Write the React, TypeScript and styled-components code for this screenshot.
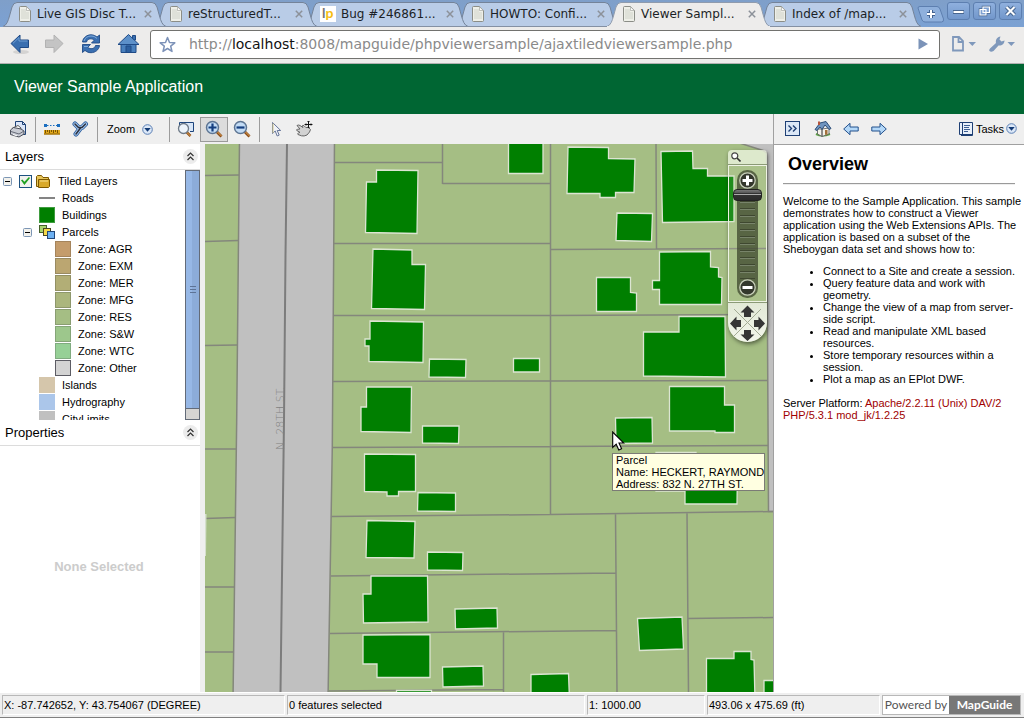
import React from "react";
import styled, { createGlobalStyle, css } from "styled-components";

const ui = `"Liberation Sans", Arial, sans-serif`;
const chrome = `"DejaVu Sans", Verdana, sans-serif`;

const GlobalStyle = createGlobalStyle`
  html, body, #root { height: 100%; }
  body { margin: 0; font: 11px/12px ${ui}; color: #000; background: #fff; }
  *, *::before, *::after { box-sizing: border-box; }
  button { margin: 0; padding: 0; border: 0; background: none; font: inherit; color: inherit; }
  svg { display: block; flex: none; }
`;

/* ---------- browser frame ---------- */

const Page = styled.div`
  display: flex;
  flex-direction: column;
  height: 100vh;
  overflow: hidden;
`;

const TabStrip = styled.div`
  display: flex;
  flex: none;
  align-items: flex-end;
  height: 27px;
  padding-left: 3px;
  background: linear-gradient(#7f9fc9, #7ba1d3);
  overflow: hidden;
`;

const Tab = styled.div<{ $active?: boolean; $order: number }>`
  display: grid;
  position: relative;
  z-index: ${(p) => (p.$active ? 20 : 10 - p.$order)};
  flex: 0 0 163px;
  height: 26px;
  margin-right: -12px;
  > * { grid-area: 1 / 1; }
`;

const TabContent = styled.div`
  display: flex;
  align-items: center;
  gap: 5px;
  padding: 0 12px 0 15px;
`;

const TabTitle = styled.button`
  flex: 1;
  text-align: left;
  white-space: nowrap;
  font: 12px/16px ${chrome};
  color: #1b1f26;
`;

const TabClose = styled.button`
  width: 12px;
  height: 12px;
  display: grid;
  place-items: center;
`;

const NewTab = styled.button`
  flex: none;
  margin: 0 2px 4px 19px;
`;

const WindowButtons = styled.div`
  display: flex;
  gap: 3px;
  margin: 0 2px 7px auto;
`;

const WindowButton = styled.button`
  display: grid;
  place-items: center;
  width: 23px;
  height: 18px;
  border: 1px solid #5d7fb0;
  border-radius: 3px;
  background: linear-gradient(#8fb0de, #7297cb);
`;

const TabList = styled.div`
  display: flex;
  flex: none;
  margin-right: -12px;
`;

const NavBar = styled.div`
  display: flex;
  flex: none;
  align-items: center;
  height: 37px;
  padding: 0 8px 2px 9px;
  background: #edeceb;
  border-bottom: 1px solid #b0b0b0;
`;

const NavButton = styled.button<{ $gap: number }>`
  flex: none;
  width: 24px;
  height: 24px;
  margin-right: ${(p) => p.$gap}px;
`;

const AddressBox = styled.form`
  display: flex;
  flex: 1;
  align-items: center;
  height: 29px;
  margin-right: 11px;
  padding: 0 11px 0 8px;
  border: 1px solid #72726f;
  border-radius: 3px;
  background: #fff;
  overflow: hidden;
`;

const Address = styled.div`
  display: grid;
  flex: 1;
  margin-left: 13px;
  font: 14px/20px ${chrome};
  color: #8a8a8a;
  white-space: nowrap;
  b { font-weight: normal; color: #111; }
`;

const MenuButton = styled.button`
  flex: none;
  & + & { margin-left: 11px; }
`;

/* ---------- application ---------- */

const Banner = styled.header`
  display: flex;
  flex: none;
  align-items: center;
  height: 50px;
  padding: 0 14px 4px;
  background: #006633;
  h1 { margin: 0; font: 16px/20px ${ui}; color: #fff; }
`;

const Main = styled.main`
  display: flex;
  flex: 1;
  min-height: 0;
`;

const Viewer = styled.section`
  display: flex;
  flex: 1;
  flex-direction: column;
  min-width: 0;
`;

const bar = css`
  display: flex;
  flex: none;
  align-items: center;
  background: #efefef;
`;

const Toolbar = styled.div`
  ${bar}
  height: 30px;
  padding-left: 4px;
`;

const Tool = styled.button<{ $pressed?: boolean }>`
  display: grid;
  place-items: center;
  flex: none;
  width: 28px;
  height: 25px;
  border: 1px solid ${(p) => (p.$pressed ? "#9a9a9a" : "transparent")};
  background: ${(p) => (p.$pressed ? "#dcdcdc" : "transparent")};
`;

const Separator = styled.span`
  flex: none;
  width: 1px;
  height: 25px;
  margin: 0 2px 0 3px;
  background: #9c9c9c;
`;

const ZoomMenu = styled.button`
  display: flex;
  align-items: center;
  gap: 7px;
  width: 66px;
  padding-left: 7px;
`;

const ViewerBody = styled.div`
  display: flex;
  flex: 1;
  min-height: 0;
`;

const Sidebar = styled.aside`
  display: flex;
  flex: 0 0 205px;
  flex-direction: column;
  border-right: 5px solid #efefef;
  background: #fff;
`;

const PanelHead = styled.div`
  display: flex;
  flex: none;
  align-items: center;
  justify-content: space-between;
  height: 26px;
  padding: 0 2px 0 5px;
  border-bottom: 1px solid #dcdcdc;
  h2 { margin: 0; font: 13px/16px ${ui}; }
`;

const LayersBody = styled.div`
  display: flex;
  flex: none;
  height: 250px;
  overflow: hidden;
`;

const Tree = styled.ul`
  flex: 1;
  margin: 0;
  padding: 3px 0 0;
  list-style: none;
  overflow: hidden;
`;

const TreeRow = styled.li<{ $indent: number; $gap: number }>`
  display: flex;
  align-items: center;
  gap: ${(p) => p.$gap}px;
  height: 17px;
  padding: 0 0 1px ${(p) => p.$indent}px;
  white-space: nowrap;
`;

const Toggle = styled.button`
  width: 9px;
  height: 9px;
`;

const LayerCheck = styled.input`
  appearance: none;
  flex: none;
  width: 13px;
  height: 13px;
  margin: 0 4px 0 7px;
  border: 1px solid #1d5180;
  background: #f2f2ee;
  display: grid;
  place-items: center;
  &:checked::before {
    content: "";
    width: 9px;
    height: 8px;
    background: #21a121;
    clip-path: polygon(0 40%, 15% 30%, 38% 58%, 88% 0, 100% 12%, 38% 100%);
  }
`;

const LayerLabel = styled.label`
  margin-left: 8px;
`;

const Swatch = styled.span<{ $fill: string; $edge: string }>`
  flex: none;
  width: 16px;
  height: 16px;
  border: 1px solid ${(p) => p.$edge};
  background: ${(p) => p.$fill};
`;

const RoadSwatch = styled.span`
  flex: none;
  width: 16px;
  height: 2px;
  background: #848484;
`;

const ScrollTrack = styled.div`
  display: flex;
  flex: 0 0 15px;
  flex-direction: column;
  border: 1px solid #636b78;
  background: #d6d5d3;
`;

const ScrollThumb = styled.div`
  display: grid;
  place-items: center;
  flex: 0 0 238px;
  border-bottom: 1px solid #636b78;
  background: linear-gradient(90deg, #97b8e6 50%, #8cacd9 50%);
`;

const PropertiesBody = styled.div`
  display: grid;
  flex: 1;
  place-items: center;
  padding: 0 2px 4px 0;
  font: bold 13px/16px ${ui};
  color: #ccc;
`;

const MapArea = styled.div`
  position: relative;
  flex: 1;
  min-width: 0;
  overflow: hidden;
  background: #a5be84;
  > svg:first-child { width: 100%; height: 100%; }
`;

const Tooltip = styled.div`
  position: absolute;
  left: 407px;
  top: 309px;
  padding: 0 0 0 3px;
  width: 153px;
  height: 38px;
  border: 1px solid #7b7b76;
  background: #ffffe1;
  white-space: nowrap;
`;

const Pointer = styled.svg`
  position: absolute;
  left: 407px;
  top: 287px;
`;

/* ---------- floating map navigator ---------- */

const Navigator = styled.div`
  position: absolute;
  right: 6px;
  top: 6px;
  width: 39px;
  border-radius: 4px 4px 20px 20px;
  box-shadow: 1px 2px 4px rgba(0, 0, 0, 0.5);
  overflow: hidden;
`;

const NavigatorTop = styled.button`
  display: block;
  width: 100%;
  height: 15px;
  padding-left: 3px;
  border-bottom: 1px solid #8b9a76;
  background: rgba(240, 247, 228, 0.75);
`;

const NavigatorMiddle = styled.div`
  display: grid;
  justify-items: center;
  height: 137px;
  padding: 4px 0;
  border: 1px solid #eef3e4;
  background: rgba(205, 222, 180, 0.15);
`;

const SliderRail = styled.div`
  display: flex;
  flex-direction: column;
  align-items: center;
  width: 21px;
  height: 128px;
  padding: 2px 0;
  border-radius: 10px;
  background: rgba(55, 65, 40, 0.72);
`;

const RoundButton = styled.button`
  width: 17px;
  height: 17px;
`;

const ZoomRange = styled.input`
  appearance: none;
  writing-mode: vertical-lr;
  direction: rtl;
  width: 29px;
  height: 90px;
  margin: 0;
  background: repeating-linear-gradient(transparent 0 5px, #3f4830 5px 6px, #78846a 6px 7px) center / 15px 100% no-repeat;
  &::-webkit-slider-thumb {
    appearance: none;
    width: 29px;
    height: 12px;
    border: 1px solid #222;
    border-radius: 4px;
    background: linear-gradient(#777, #555 30%, #333 31%, #333 35%, #aaa 36%, #aaa 45%, #333 46%, #2a2a2a);
  }
`;

const Dial = styled.div`
  height: 40px;
  border-top: 1px solid #8b9a76;
  background: linear-gradient(#e2e9d6, #f3f6ec);
`;

/* ---------- task pane ---------- */

const TaskPane = styled.aside`
  display: flex;
  flex: 0 0 251px;
  flex-direction: column;
  border-left: 1px solid #a0a0a0;
  background: #fff;
`;

const TaskBar = styled.div`
  ${bar}
  height: 31px;
  padding: 0 7px 1px 4px;
  border-bottom: 1px solid #a0a0a0;
`;

const TaskNav = styled.nav`
  display: flex;
  margin-left: 3px;
`;

const TasksButton = styled.button`
  display: flex;
  align-items: center;
  gap: 2px;
  margin-left: auto;
`;

const Article = styled.article`
  padding: 9px 0 0 9px;
  h2 { margin: 0 5px 9px; font: bold 18px/20px ${ui}; }
  hr { margin: 0 9px 10px 0; border: 0; border-top: 1px solid #9a9a9a; border-bottom: 1px solid #eee; }
  p { margin: 0 0 10px; }
  ul { margin: 0 0 12px; padding-left: 40px; }
`;

const Server = styled.span`
  color: #a00000;
`;

/* ---------- status bar ---------- */

const StatusBar = styled.footer`
  display: flex;
  flex: none;
  gap: 2px;
  height: 26px;
  padding: 2px 3px 2px 2px;
  background: #efefef;
  border-top: 1px solid #fff;
  border-bottom: 1px solid #808080;
`;

const StatusCell = styled.div<{ $basis: number; $grow?: boolean }>`
  flex: ${(p) => (p.$grow ? 1 : 0)} 0 ${(p) => p.$basis}px;
  padding: 3px 1px;
  border: 1px solid;
  border-color: #b8b8b8 #fff #fff #b8b8b8;
  white-space: nowrap;
`;

const Powered = styled.a`
  display: flex;
  flex: none;
  width: 139px;
  border: 1px solid #b8b8b8;
  background: #fff;
  font: 12px/18px Lato, sans-serif;
  text-align: center;
  text-decoration: none;
  color: #555;
  white-space: nowrap;
  span { flex: 0 0 66px; }
  b { flex: 1; background: #777; color: #fff; }
`;

/* ---------- icons ---------- */

const PageIcon = () => (
  <svg width="14" height="16" viewBox="0 0 14 16">
    <path d="M1.5 1.5q0-1 1-1h6l4 4v10q0 1-1 1h-9q-1 0-1-1z" fill="#eeefe8" stroke="#8b8d87" />
    <path d="M3 3h5v3h3v7H3z" fill="#dfe1d9" />
    <path d="M8.5.8v3.7h3.8z" fill="#fff" stroke="#a6a8a2" strokeWidth=".7" />
  </svg>
);

const LaunchpadIcon = () => (
  <svg width="16" height="16" viewBox="0 0 16 16" overflow="visible">
    <rect width="16" height="16" fill="#fff" />
    <text x="2" y="12" fontFamily="Lato, sans-serif" fontSize="14" fontWeight="bold" fill="#777">
      l<tspan fill="#f5bd10">p</tspan>
    </text>
  </svg>
);

const TabShape = ({ active }: { active?: boolean }) => (
  <svg width="163" height="26" viewBox="0 0 163 26">
    <path
      d="M0 25.5C4 24 5 20 6.5 15L9 6Q10.5 1.5 14 1.5H149Q152.500 1.500 154 6L156.500 15C158 20 159 24 163 25.500"
      fill={active ? "#edeceb" : "#b9cce7"}
      stroke={active ? "#8f9bad" : "#748399"}
    />
    <path d="M0 25.500H163" stroke={active ? "#edeceb" : "#8490a3"} />
  </svg>
);

const CloseIcon = () => (
  <svg width="8" height="8" viewBox="0 0 8 8">
    <path d="M.8.800l6.400 6.400M7.200.800L.8 7.200" stroke="#8c9199" strokeWidth="1.500" />
  </svg>
);

const blueFill = "#3a6fb0";

const BackIcon = () => (
  <svg width="24" height="24" viewBox="0 0 24 24">
    <ellipse cx="12" cy="20" rx="8" ry="2" fill="#d4d3d2" />
    <path d="M2 11.500L11 3v5h8.500v7.500H11v5z" fill={blueFill} stroke="#1f4a86" strokeLinejoin="round" />
    <path d="M4 11.300L10 5.500V9h8.500" fill="none" stroke="#6f9fd4" />
  </svg>
);

const ForwardIcon = () => (
  <svg width="24" height="24" viewBox="0 0 24 24">
    <path d="M20 11.500L11 3v5H2.500v7.500H11v5z" fill="#c4c4c4" stroke="#b2b2b2" strokeLinejoin="round" />
  </svg>
);

const ReloadIcon = () => (
  <svg width="24" height="24" viewBox="0 0 24 24">
    <g fill={blueFill} stroke="#1f4a86" strokeWidth=".9" strokeLinejoin="round">
      <path d="M3.500 10C4 5.500 8 2.800 12 2.800c2.500 0 4.400.9 6 2.300L20.500 3v8h-8l2.700-2.800C13 6 8.500 6.200 7.500 10z" />
      <path d="M20.500 13.500c-.5 4.500-4.500 7.200-8.500 7.200-2.500 0-4.400-.9-6-2.300L3.500 20.500v-8h8L8.800 15.300c2.200 2.200 6.700 2 7.700-1.800z" />
    </g>
    <path d="M5 9C6 5.500 9 4 12 4s5 1.500 6 2.500M5 14.500h4" fill="none" stroke="#7fabdc" />
  </svg>
);

const HomeIcon = () => (
  <svg width="24" height="24" viewBox="0 0 24 24">
    <path d="M5 12v8.500h15V12" fill="#4a80bd" stroke="#1f4a86" />
    <path d="M16.500 3.500h3V8h-3z" fill={blueFill} stroke="#1f4a86" />
    <path d="M2 12.500L12.500 2.500 23 12.500z" fill="#5d90c9" stroke="#1f4a86" strokeLinejoin="round" />
    <path d="M10 14h5v6.500h-5z" fill="#2c5f9f" stroke="#1f4a86" />
  </svg>
);

const StarIcon = () => (
  <svg width="17" height="17" viewBox="0 0 17 17">
    <path
      d="M8.500 1.500l2 5 5.300.3-4.100 3.400 1.300 5.200-4.500-2.900L4 15.400l1.300-5.200L1.200 6.800l5.300-.3z"
      fill="#fff"
      stroke="#7d92b8"
      strokeWidth="1.500"
      strokeLinejoin="round"
    />
  </svg>
);

const PageMenuIcon = () => (
  <svg width="26" height="18" viewBox="0 0 26 18">
    <path d="M2 2h6l4 4v9.500H2zM7.500 2v5h5" fill="none" stroke="#7f98bb" strokeWidth="1.800" />
    <path d="M17.500 7h7.500l-3.700 4z" fill="#7f98bb" />
  </svg>
);

const WrenchIcon = () => (
  <svg width="28" height="18" viewBox="0 0 28 18">
    <path
      d="M2 13.500L8 8C7.300 5 9 2 12.500 1.500L11.500 4.500 13.500 6.500 16.500 5.500C16.500 9 13.500 11 10.500 10.500L5.500 16Q3 17.500 1.500 16 .5 15 2 13.500z"
      fill="#7f98bb"
    />
    <path d="M19.500 7H27l-3.700 4z" fill="#7f98bb" />
  </svg>
);

const ChevronDisc = () => (
  <svg width="11" height="11" viewBox="0 0 11 11">
    <circle cx="5.500" cy="5.500" r="4.800" fill="#dbe7f7" stroke="#5a7fb4" />
    <path d="M2.300 4h6.400L5.500 7.800z" fill="#123a75" />
  </svg>
);

const PrintIcon = () => (
  <svg width="18" height="18" viewBox="0 0 18 18">
    <path d="M6.500 1.500h7l3 3v10h-10z" fill="#dbe6f8" stroke="#1e4276" />
    <path d="M13.500 1.500v3h3" fill="none" stroke="#1e4276" />
    <path d="M3.500 8L9 5.500l3 2.500-1 3" fill="#fff" stroke="#555" />
    <path d="M1.500 10l3-2.500L12 9l3 2v3l-5 3-8.500-2.500z" fill="#c9ccd4" stroke="#4a4e59" />
    <path d="M2 11.500l8 2.500 5-3" fill="none" stroke="#666b78" />
    <path d="M4 14.500l4 1.300" stroke="#fff" />
  </svg>
);

const MeasureIcon = () => (
  <svg width="18" height="18" viewBox="0 0 18 18">
    <path d="M1 4h3v3H1zM14 4h3v3h-3z" fill="#1c6fc0" />
    <path d="M4 5.500h10" stroke="#1c6fc0" strokeDasharray="1.500 1.500" />
    <path d="M1 10h16v4.500H1z" fill="#e0a81d" />
    <path d="M1 14h16" stroke="#8a5c00" />
    <path d="M2.500 10v3M4.500 10v2M6.500 10v3M8.500 10v2M10.500 10v3M12.500 10v2M14.500 10v3" stroke="#7a5200" />
  </svg>
);

const BufferIcon = () => (
  <svg width="18" height="18" viewBox="0 0 18 18">
    <path d="M4 4l3.500 3.500h3.500L14.500 4M9.500 8L5 14" fill="none" stroke="#2a5c9c" strokeWidth="5" strokeLinecap="round" strokeLinejoin="round" />
    <path d="M4 4l3.500 3.500h3.500L14.500 4M9.500 8L5 14" fill="none" stroke="#a8c9ee" strokeWidth="3.400" strokeLinecap="round" strokeLinejoin="round" />
    <path d="M4 4l3.500 3.500h3.500L14.500 4M9.500 8L5 14" fill="none" stroke="#2b3140" strokeWidth="1.500" strokeLinecap="round" />
  </svg>
);

const ZoomRectIcon = () => (
  <svg width="18" height="18" viewBox="0 0 18 18">
    <path d="M2.500 5V2.500h14v9H13" fill="#d8e6f7" stroke="#1d457d" />
    <path d="M9.500 12l4 4" stroke="#8a4c16" strokeWidth="2.500" />
    <path d="M9.500 12l4 4" stroke="#e6a85a" />
    <circle cx="6.500" cy="8.500" r="5" fill="#edf4fb" stroke="#6e7a88" strokeWidth="1.300" />
  </svg>
);

const Lens = ({ plus }: { plus?: boolean }) => (
  <svg width="18" height="18" viewBox="0 0 18 18">
    <path d="M11.500 11.500l5 5" stroke="#8a4c16" strokeWidth="2.800" />
    <path d="M12 11.500l4.500 4.500" stroke="#e6a85a" />
    <circle cx="7.500" cy="7.500" r="6" fill="#c3dcf5" stroke="#5d7593" strokeWidth="1.500" />
    <path d={plus ? "M3.500 7.500h8M7.500 3.500v8" : "M3.500 7.500h8"} stroke="#153f80" strokeWidth="2.200" />
  </svg>
);

const SelectIcon = () => (
  <svg width="18" height="18" viewBox="0 0 18 18">
    <path d="M5.500 2.500v11l2.700-2.500 2 5 2-.9-2-4.600h3.500z" fill="#f1f3f8" stroke="#66759a" strokeLinejoin="round" />
    <path d="M6 3.500V13" stroke="#d5c98a" />
  </svg>
);

const PanIcon = () => (
  <svg width="18" height="18" viewBox="0 0 18 18">
    <path
      d="M2 5.500q1.500-1 3 0L8 7.500 7 6q.5-1 2-.3l2 2q1.500-1 3 .3l1.500 1.500-1 2.500-2.500 3q-3 1.500-5.500.8L3 14.500q-1-1 .5-1.500L5 12.300 1.800 10.500q-.8-1 .8-1.200L5 9z"
      fill="#d2d2d2"
      stroke="#666"
    />
    <path d="M13.500 1v7M10 4.500h7M12.500 2l1-1 1 1M12.500 7l1 1 1-1M11 3.500l-1 1 1 1M16 3.500l1 1-1 1" stroke="#111" fill="none" />
  </svg>
);

const CollapseIcon = () => (
  <svg width="15" height="15" viewBox="0 0 15 15">
    <circle cx="7.500" cy="7.500" r="7.500" fill="#ececec" />
    <path d="M4.500 7l3-3 3 3M4.500 11l3-3 3 3" fill="none" stroke="#333" strokeWidth="1.200" />
  </svg>
);

const MinusBox = () => (
  <svg width="9" height="9" viewBox="0 0 9 9">
    <rect x=".5" y=".5" width="8" height="8" rx="1" fill="#f2f1ec" stroke="#7c96b5" />
    <path d="M2 4.500h5" stroke="#000" />
  </svg>
);

const FolderIcon = () => (
  <svg width="14" height="13" viewBox="0 0 14 13">
    <path d="M.5 11.500v-10l1-1h4l1.500 2h5.500v9z" fill="#e8c65a" stroke="#7d5800" />
    <path d="M2.500 12.500V4.500h11v7l-1 1z" fill="#d9a92a" stroke="#7d5800" />
    <path d="M4 6h8" stroke="#f7e08f" />
  </svg>
);

const ThemeIcon = () => (
  <svg width="16" height="16" viewBox="0 0 16 16">
    <rect x=".5" y="1.500" width="7" height="7" fill="#a9d36d" stroke="#44602a" />
    <rect x="4.500" y="4.500" width="7" height="7" fill="#f5d94a" stroke="#4b4620" />
    <rect x="8.500" y="7.500" width="7" height="7" fill="#6eb1f2" stroke="#22477a" />
  </svg>
);

const TaskToggleIcon = () => (
  <svg width="15" height="15" viewBox="0 0 15 15">
    <rect x=".5" y=".5" width="14" height="14" fill="#dbe7f6" stroke="#1e3f74" />
    <path d="M3.500 4.500l3 3-3 3M8 4.500l3 3-3 3" fill="none" stroke="#1e3f74" strokeWidth="1.400" />
  </svg>
);

const TaskHomeIcon = () => (
  <svg width="18" height="18" viewBox="0 0 18 18">
    <path d="M2 14q6 3 14 0" stroke="#5aa044" strokeWidth="2" fill="none" />
    <path d="M3.500 9v5l4.500 2.500V9zM8 9v7.500l7-2.500V8z" fill="#f4f2ea" stroke="#555" strokeWidth=".8" />
    <path d="M1 9.500L6 3l6-1.500 5 7-2 1L11 5 8 9.500 6 7 3 10.500z" fill="#6f94bf" stroke="#2c4d78" />
    <path d="M4 1.500h2V5H4z" fill="#b5563d" />
    <path d="M11 10h2.500v4.800H11z" fill="#a2703a" />
  </svg>
);

const TaskArrow = ({ forward }: { forward?: boolean }) => (
  <svg width="16" height="14" viewBox="0 0 16 14">
    <path
      d={forward ? "M15.300 7L9 1.300V5H.8v4H9v3.700z" : "M.7 7L7 1.300V5h8.200v4H7v3.700z"}
      fill="#b4d8f8"
      stroke="#23508c"
      strokeLinejoin="round"
    />
  </svg>
);

const TaskListIcon = () => (
  <svg width="15" height="15" viewBox="0 0 15 15">
    <path d="M.5 1.500h13v12H.5z" fill="#e9f0fa" stroke="#1e3f74" />
    <path d="M3.500 1.500v12M13.500 2v12.500H2" fill="none" stroke="#1e3f74" />
    <path d="M5 4.500h6M5 6.500h5M5 8.500h6M5 10.500h4" stroke="#3d5f93" />
  </svg>
);

/* ---------- map data ---------- */

const buildings = [
  "376.5,170 418,170.5 417,233.5 365.5,232.5 366.5,182 376.5,182",
  "373,249 412,250 412,264.5 425.5,264.5 424.5,309.5 371.5,308.5",
  "370,321 423.5,322 423,362.5 369,361.5 369,346 365,346 365,339 370,339",
  "429.5,359 466,359.5 465.5,377.5 429,377",
  "366.5,387 411.5,387 411,432.5 361,431.5 361,407 366.5,407",
  "422.5,426 459,426 458.5,443.5 422.5,443",
  "364.5,454 415.5,454.5 415.5,491.5 398.5,491.5 398.5,496 387,496 387,492 364.5,491.5",
  "418,492.5 455.5,493 455.5,511.5 417.5,511",
  "367,520.5 415,521.5 414,558 366,557.5",
  "427.5,552 463,552.5 462.5,570.5 427.5,570",
  "371,576 427.5,576 428,622 363.5,623 363,594 371,594",
  "455,609 497,608 497.5,628 455.5,629",
  "363,635 430,634.5 430,677.5 377,677.5 377,664 363,664",
  "442.5,667 483,666 483.5,686 443,687",
  "396.5,690.5 431.5,690.5 431.5,700 396.5,700",
  "508.5,142 543,142 543,173.5 508.5,173.5",
  "568,147 608.5,147.5 608.5,158.5 635,159 634,192.5 615.5,192.5 615.5,197.5 600,197.5 600,193.5 567,193.5",
  "617,213 652.5,213.5 651.5,241.5 616,240.5",
  "661,151.5 692.5,151 693,168.5 707.5,168.5 707.5,176 734,176 734,221.5 662.5,222.5",
  "596.5,277.5 630.5,277.5 630.5,292.5 636.5,293 636.5,311.5 596.5,311.5",
  "659.5,252 710.5,251.5 710.5,267 718.5,267.5 718.5,277 722,277.5 721.5,304.5 659.5,304.5 659.5,289.5 652.5,289.5 652.5,280.5 659.5,280.5",
  "679,316.5 725,316.5 725.5,377 643.5,376 643.5,332 679,332",
  "513.5,358.5 539.5,358.5 539.5,372 513.5,372",
  "669.5,386.5 724.5,386.5 724.5,405 734.5,405 734.5,432.5 715,432.5 715,431 669.5,431",
  "615.5,418 652,417.5 652.5,443 616,443.5",
  "656,452.5 696,452.5 696,470 737.5,470 737,504 685,504 685,491 656,491",
  "637.5,618.5 682,617 683.5,649 639.5,650.5",
  "706.5,658.5 734,658.5 734,651.5 751,651.5 751,659.5 754,660 755,700 706.5,700",
  "764,680.5 780,680.5 780,700 764,700",
  "531,674.5 568.5,673.5 569.5,700 531,700",
];

const boundaries = [
  "M205 175.500L239 175M205 241.500L238.500 240.500M205 345.500L237 345M205 449H236M205 518.500L235.500 517.500M205 587H234.500M205 652H233",
  "M334 162.500H442.500M442.500 144V184M442.500 183.500H550.500M550.500 144V514.500",
  "M333.500 243.500H550.500M550.500 249.500L767 248.500M656 144L656.500 249",
  "M333 315.500H550L767 314.500M332.500 381.500L550 381L768 380.500M332 447.500L550 446.500L768 445.500",
  "M331.500 516.500L550 514.500L773 511.500M331 576L615.500 573M330 633.500L616 630.500M329 691L503.500 689.500",
  "M503.500 632V692M615.500 514L617 692M687 512.500L688.500 692M688 618.500L773 617.500",
];

const ParcelMap = () => (
  <svg viewBox="205 144 568 548" preserveAspectRatio="xMinYMin slice" role="img" aria-label="Parcel map">
    <rect x="205" y="144" width="1200" height="900" fill="#a5be84" />
    <g stroke="#84877c" strokeWidth="1.500">
      <path d="M239.500 140L236.700 420 233 700H328L332.300 447 334.500 140z" fill="#c0c0c0" />
      <path d="M730 140L763 150.500 766.500 153 768.500 511.500 780 511.500V140z" fill="#c0c0c0" />
      <path d={boundaries.join("")} fill="none" />
    </g>
    <path d="M287 144L285.500 255 284 420 280.500 692" fill="none" stroke="#7c7c7c" strokeWidth="2" />
    <path d="M205 514h1.500l-.5 42h-1z" fill="#d5e0cc" />
    <g fill="#007f00" stroke="#dce5d2" strokeWidth="1.300">
      {buildings.map((points) => (
        <polygon key={points} points={points} />
      ))}
    </g>
    <text transform="translate(284 450) rotate(-90)" fontFamily="DejaVu Sans, sans-serif" fontSize="11" fontWeight="200" fill="#808080">
      N. 28TH ST.
    </text>
  </svg>
);

const Knob = ({ plus }: { plus?: boolean }) => (
  <svg width="17" height="17" viewBox="0 0 17 17">
    <circle cx="8.500" cy="8.500" r="7.700" fill="#33372c" stroke="#c8cfba" strokeWidth="1.300" />
    <path d={plus ? "M3.500 8.500h10M8.500 3.500v10" : "M3.500 8.500h10"} stroke="#fff" strokeWidth="3" />
  </svg>
);

const PanDial = () => (
  <svg width="39" height="40" viewBox="0 0 39 40">
    <path d="M6 6l27 27M33 6L6 33" stroke="#a3ab94" />
    <g fill="#353535">
      <path d="M19.500 2.500l7 7h-3.500v4.500h-7V9.500h-3.500z" />
      <path d="M19.500 38l7-6.500h-3.500V27h-7v4.500h-3.500z" />
      <path d="M2 20.500l6.500-7V17h4.500v7H8.500v3.500z" />
      <path d="M37 20.500l-6.500-7V17H26v7h4.500v3.500z" />
    </g>
  </svg>
);

/* ---------- content ---------- */

const tabs = ["Live GIS Disc T...", "reStructuredT...", "Bug #246861...", "HOWTO: Confi...", "Viewer Sampl...", "Index of /map..."];

const zones = [
  ["AGR", "#c49c6c", "#a5845c"],
  ["EXM", "#bba671", "#998a62"],
  ["MER", "#b2ae76", "#929064"],
  ["MFG", "#abb67d", "#8e976c"],
  ["RES", "#a5be84", "#8a9d72"],
  ["S&W", "#9dc78c", "#85a578"],
  ["WTC", "#96d096", "#80ab80"],
  ["Other", "#d3d3d3", "#5c5c64"],
];

const areas = [
  ["Islands", "#d5c6ab"],
  ["Hydrography", "#abc6ea"],
  ["CityLimits", "#c0c0c0"],
];

const BrowserFrame = () => (
  <>
    <TabStrip>
      <TabList>
        {tabs.map((title, i) => (
          <Tab key={title} $order={i} $active={i === 4}>
            <TabShape active={i === 4} />
            <TabContent>
              {i === 2 ? <LaunchpadIcon /> : <PageIcon />}
              <TabTitle>{title}</TabTitle>
              <TabClose aria-label="Close tab"><CloseIcon /></TabClose>
            </TabContent>
          </Tab>
        ))}
      </TabList>
      <NewTab aria-label="New tab">
        <svg width="29" height="17" viewBox="0 0 29 17">
          <path d="M2 2Q2 .5 4 .5h17Q23 .5 24 3l3.500 10q.5 3-2 3H9q-2 0-3-2z" fill="#8fb0dc" stroke="#5d7fb0" />
          <path d="M11 8h8M15 4v8" stroke="#42618f" strokeWidth="4" />
          <path d="M11 8h8M15 4v8" stroke="#fff" strokeWidth="2" />
        </svg>
      </NewTab>
      <WindowButtons>
        <WindowButton aria-label="Minimize">
          <svg width="13" height="12" viewBox="0 0 13 12"><path d="M1 7h11" stroke="#47658f" strokeWidth="4" /><path d="M1.500 7h10" stroke="#fff" strokeWidth="2" /></svg>
        </WindowButton>
        <WindowButton aria-label="Restore">
          <svg width="13" height="12" viewBox="0 0 13 12"><path d="M5 2h6.500v5.500H5zM2 4.500h6V10H2z" fill="none" stroke="#47658f" strokeWidth="2.500" /><path d="M5 2h6.500v5.500H5zM2 4.500h6V10H2z" fill="#7fa1d2" stroke="#fff" strokeWidth="1.200" /></svg>
        </WindowButton>
        <WindowButton aria-label="Close">
          <svg width="13" height="12" viewBox="0 0 13 12"><path d="M2.500 2l8 8M10.500 2l-8 8" stroke="#47658f" strokeWidth="4" /><path d="M2.500 2l8 8M10.500 2l-8 8" stroke="#fff" strokeWidth="2" /></svg>
        </WindowButton>
      </WindowButtons>
    </TabStrip>
    <NavBar>
      <NavButton $gap={10} aria-label="Back"><BackIcon /></NavButton>
      <NavButton $gap={12} aria-label="Forward"><ForwardIcon /></NavButton>
      <NavButton $gap={13} aria-label="Reload"><ReloadIcon /></NavButton>
      <NavButton $gap={10} aria-label="Home"><HomeIcon /></NavButton>
      <AddressBox>
        <StarIcon />
        <Address role="textbox" aria-label="Address" contentEditable suppressContentEditableWarning spellCheck={false}>
          <span>http://<b>localhost</b>:8008/mapguide/phpviewersample/ajaxtiledviewersample.php</span>
        </Address>
        <button type="button" aria-label="Go">
          <svg width="10" height="12" viewBox="0 0 10 12"><path d="M.5.500L10 6 .5 11.500z" fill="#7b93b8" /></svg>
        </button>
      </AddressBox>
      <MenuButton aria-label="Page menu"><PageMenuIcon /></MenuButton>
      <MenuButton aria-label="Tools menu"><WrenchIcon /></MenuButton>
    </NavBar>
  </>
);

const Layers = () => (
  <LayersBody>
    <Tree>
      <TreeRow $indent={3} $gap={0}>
        <Toggle aria-label="Collapse Tiled Layers"><MinusBox /></Toggle>
        <LayerCheck type="checkbox" id="tiled" defaultChecked />
        <FolderIcon />
        <LayerLabel htmlFor="tiled">Tiled Layers</LayerLabel>
      </TreeRow>
      <TreeRow $indent={39} $gap={7}><RoadSwatch />Roads</TreeRow>
      <TreeRow $indent={39} $gap={7}><Swatch $fill="#007f00" $edge="#3f9c3f" />Buildings</TreeRow>
      <TreeRow $indent={23} $gap={7}>
        <Toggle aria-label="Collapse Parcels"><MinusBox /></Toggle>
        <ThemeIcon />Parcels
      </TreeRow>
      {zones.map(([name, fill, edge]) => (
        <TreeRow key={name} $indent={55} $gap={7}><Swatch $fill={fill} $edge={edge} />Zone: {name}</TreeRow>
      ))}
      {areas.map(([name, fill]) => (
        <TreeRow key={name} $indent={39} $gap={7}><Swatch $fill={fill} $edge={fill} />{name}</TreeRow>
      ))}
    </Tree>
    <ScrollTrack>
      <ScrollThumb>
        <svg width="6" height="8" viewBox="0 0 6 8"><path d="M0 .5h6M0 3.500h6M0 6.500h6" stroke="#5d7396" /></svg>
      </ScrollThumb>
    </ScrollTrack>
  </LayersBody>
);

const MapNavigator = () => (
  <Navigator>
    <NavigatorTop aria-label="Zoom window">
      <svg width="10" height="10" viewBox="0 0 10 10">
        <circle cx="3.800" cy="3.800" r="3" fill="#fff" stroke="#444" strokeWidth="1.200" />
        <path d="M6 6l3.500 3.500" stroke="#333" strokeWidth="1.600" />
      </svg>
    </NavigatorTop>
    <NavigatorMiddle>
      <SliderRail>
        <RoundButton aria-label="Zoom in"><Knob plus /></RoundButton>
        <ZoomRange type="range" aria-label="Zoom level" min={0} max={10} defaultValue={10} />
        <RoundButton aria-label="Zoom out"><Knob /></RoundButton>
      </SliderRail>
    </NavigatorMiddle>
    <Dial><PanDial /></Dial>
  </Navigator>
);

export default function App() {
  return (
    <Page>
      <GlobalStyle />
      <BrowserFrame />
      <Banner><h1>Viewer Sample Application</h1></Banner>
      <Main>
        <Viewer>
          <Toolbar>
            <Tool aria-label="Print"><PrintIcon /></Tool>
            <Separator />
            <Tool aria-label="Measure"><MeasureIcon /></Tool>
            <Tool aria-label="Buffer"><BufferIcon /></Tool>
            <Separator />
            <ZoomMenu>Zoom <ChevronDisc /></ZoomMenu>
            <Separator />
            <Tool aria-label="Zoom rectangle"><ZoomRectIcon /></Tool>
            <Tool aria-label="Zoom in" $pressed><Lens plus /></Tool>
            <Tool aria-label="Zoom out"><Lens /></Tool>
            <Separator />
            <Tool aria-label="Select"><SelectIcon /></Tool>
            <Tool aria-label="Pan"><PanIcon /></Tool>
          </Toolbar>
          <ViewerBody>
            <Sidebar>
              <PanelHead><h2>Layers</h2><button aria-label="Collapse layers"><CollapseIcon /></button></PanelHead>
              <Layers />
              <PanelHead><h2>Properties</h2><button aria-label="Collapse properties"><CollapseIcon /></button></PanelHead>
              <PropertiesBody>None Selected</PropertiesBody>
            </Sidebar>
            <MapArea>
              <ParcelMap />
              <MapNavigator />
              <Tooltip role="tooltip">Parcel<br />Name: HECKERT, RAYMOND<br />Address: 832 N. 27TH ST.</Tooltip>
              <Pointer width="13" height="20" viewBox="0 0 13 20">
                <path d="M.7 1v15.500l3.500-3.300 2.600 5.800 2.800-1.300L7 12h4.800z" fill="#fff" stroke="#000" strokeWidth="1.100" />
              </Pointer>
            </MapArea>
          </ViewerBody>
        </Viewer>
        <TaskPane>
          <TaskBar>
            <Tool aria-label="Hide task pane"><TaskToggleIcon /></Tool>
            <TaskNav>
              <Tool aria-label="Home"><TaskHomeIcon /></Tool>
              <Tool aria-label="Previous task"><TaskArrow /></Tool>
              <Tool aria-label="Next task"><TaskArrow forward /></Tool>
            </TaskNav>
            <TasksButton><TaskListIcon />Tasks<ChevronDisc /></TasksButton>
          </TaskBar>
          <Article>
            <h2>Overview</h2>
            <hr />
            <p>
              Welcome to the Sample Application. This sample demonstrates how to construct a Viewer application using
              the Web Extensions APIs. The application is based on a subset of the Sheboygan data set and shows how to:
            </p>
            <ul>
              <li>Connect to a Site and create a session.</li>
              <li>Query feature data and work with geometry.</li>
              <li>Change the view of a map from server-side script.</li>
              <li>Read and manipulate XML based resources.</li>
              <li>Store temporary resources within a session.</li>
              <li>Plot a map as an EPlot DWF.</li>
            </ul>
            <p>Server Platform: <Server>Apache/2.2.11 (Unix) DAV/2 PHP/5.3.1 mod_jk/1.2.25</Server></p>
          </Article>
        </TaskPane>
      </Main>
      <StatusBar>
        <StatusCell $basis={283}>X: -87.742652, Y: 43.754067 (DEGREE)</StatusCell>
        <StatusCell $basis={298} $grow>0 features selected</StatusCell>
        <StatusCell $basis={118}>1: 1000.00</StatusCell>
        <StatusCell $basis={173}>493.06 x 475.69 (ft)</StatusCell>
        <Powered href="#mapguide"><span>Powered by</span><b>MapGuide</b></Powered>
      </StatusBar>
    </Page>
  );
}
